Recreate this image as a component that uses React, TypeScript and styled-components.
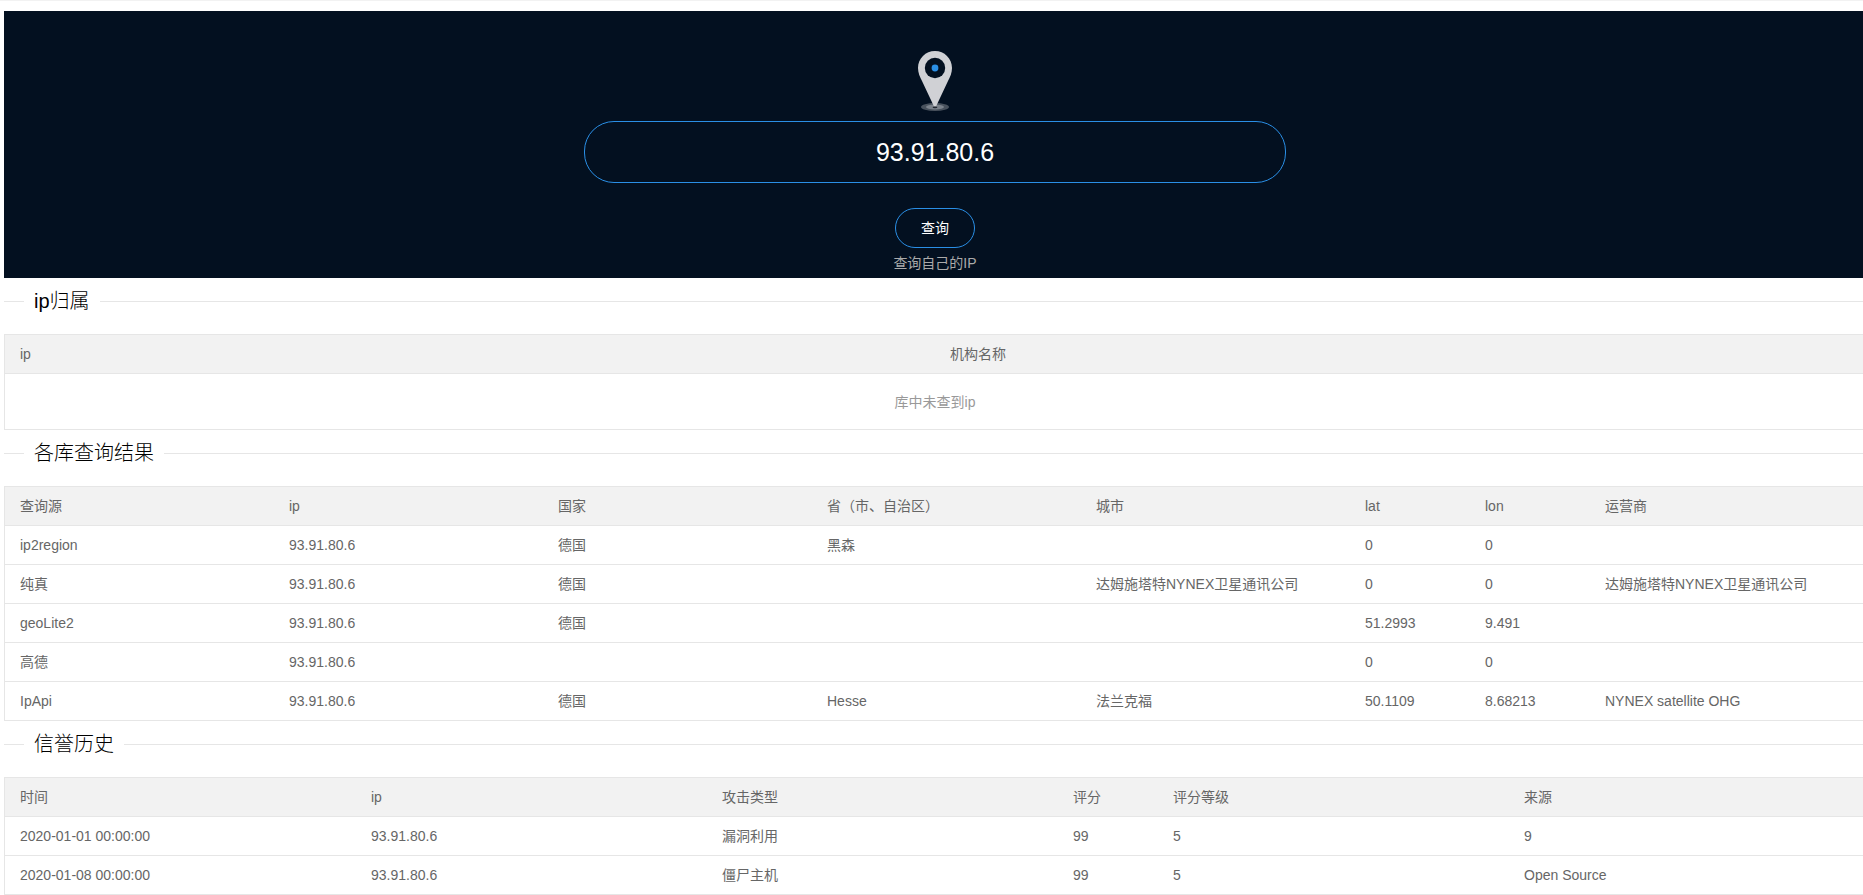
import React, { useState } from "react";
import styled, { createGlobalStyle } from "styled-components";

const GlobalStyle = createGlobalStyle`
  *, *::before, *::after { box-sizing: border-box; }
  body {
    margin: 0;
    background: #fff;
    color: #333;
    font: 14px/24px "Liberation Sans", "Noto Sans CJK SC", sans-serif;
  }
`;

const Page = styled.div`
  border-top: 1px solid #f2f2f2;
  overflow-x: clip;
`;

const Content = styled.main`
  margin: 10px -3px 0 4px;
`;

const Hero = styled.form`
  display: flex;
  flex-direction: column;
  align-items: center;
  height: 267px;
  padding-top: 38px;
  background: #031020;
`;

const IpInput = styled.input`
  width: 702px;
  max-width: 90%;
  height: 62px;
  margin-top: 8px;
  padding: 0 30px;
  border: 1px solid #2a8fe6;
  border-radius: 30px;
  background: transparent;
  color: #fff;
  font: inherit;
  font-size: 25px;
  text-align: center;
  outline: none;
`;

const QueryButton = styled.button`
  width: 80px;
  height: 40px;
  margin-top: 25px;
  padding: 0;
  border: 1px solid #2a8fe6;
  border-radius: 20px;
  background: transparent;
  color: #fff;
  font: inherit;
  cursor: pointer;
`;

const OwnIpLink = styled.a`
  margin-top: 3px;
  color: #aaa;
  text-decoration: none;
`;

const Section = styled.fieldset`
  margin: 8px 0 18px;
  padding: 0;
  border: 0;
  border-top: 1px solid #e6e6e6;
`;

const SectionTitle = styled.legend`
  margin-left: 20px;
  padding: 0 10px;
  color: #000;
  font-size: 20px;
  font-weight: 300;
  line-height: 30px;
`;

const DataTable = styled.table`
  width: 100%;
  table-layout: fixed;
  border: 1px solid #e6e6e6;
  border-collapse: separate;
  border-spacing: 0;
  color: #666;

  th, td {
    height: 39px;
    padding: 0 15px;
    border-bottom: 1px solid #e6e6e6;
    font-weight: 400;
    line-height: 28px;
    text-align: left;
    white-space: nowrap;
  }
  th { background: #f2f2f2; }
  tbody tr:last-child td { height: 38px; border-bottom: 0; }
`;

const Column = styled.col<{ $width?: number }>`
  width: ${(p) => (p.$width ? `${p.$width}px` : "auto")};
`;

const EmptyCell = styled.td`
  && {
    padding: 14px 15px 13px;
    color: #999;
    text-align: center;
  }
`;

type Col = { title: string; width?: number };

function PinIcon() {
  return (
    <svg width="36" height="64" viewBox="0 0 36 64" aria-hidden="true">
      <ellipse cx="18" cy="58" rx="14" ry="4" fill="#48515c" />
      <ellipse cx="18" cy="58" rx="9" ry="2.6" fill="#7b828b" />
      <path
        d="M18 2C8.600 2 1 9.500 1 19c0 5 2 9 4 13l12 25.500h2L31 32c2-4 4-8 4-13C35 9.500 27.400 2 18 2z"
        fill="#d0d1d5"
      />
      <ellipse cx="18" cy="58.300" rx="2.400" ry="0.900" fill="#20262f" />
      <circle cx="18" cy="19" r="10.200" fill="#031020" />
      <circle cx="18" cy="19" r="3.400" fill="#2a8fe6" />
    </svg>
  );
}

function Panel({ title, columns, rows, empty }: { title: string; columns: Col[]; rows: string[][]; empty?: string }) {
  return (
    <>
      <Section>
        <SectionTitle>{title}</SectionTitle>
      </Section>
      <DataTable aria-label={title}>
        <colgroup>
          {columns.map((c) => (
            <Column key={c.title} $width={c.width} />
          ))}
        </colgroup>
        <thead>
          <tr>
            {columns.map((c) => (
              <th key={c.title} scope="col">{c.title}</th>
            ))}
          </tr>
        </thead>
        <tbody>
          {rows.map((row, i) => (
            <tr key={i}>
              {row.map((cell, j) => (
                <td key={j}>{cell}</td>
              ))}
            </tr>
          ))}
          {empty && (
            <tr>
              <EmptyCell colSpan={columns.length}>{empty}</EmptyCell>
            </tr>
          )}
        </tbody>
      </DataTable>
    </>
  );
}

const ownerColumns: Col[] = [{ title: "ip" }, { title: "机构名称" }];

const sourceColumns: Col[] = [
  { title: "查询源" },
  { title: "ip" },
  { title: "国家" },
  { title: "省（市、自治区）" },
  { title: "城市" },
  { title: "lat", width: 120 },
  { title: "lon", width: 120 },
  { title: "运营商", width: 275 },
];

const sourceRows = [
  ["ip2region", "93.91.80.6", "德国", "黑森", "", "0", "0", ""],
  ["纯真", "93.91.80.6", "德国", "", "达姆施塔特NYNEX卫星通讯公司", "0", "0", "达姆施塔特NYNEX卫星通讯公司"],
  ["geoLite2", "93.91.80.6", "德国", "", "", "51.2993", "9.491", ""],
  ["高德", "93.91.80.6", "", "", "", "0", "0", ""],
  ["IpApi", "93.91.80.6", "德国", "Hesse", "法兰克福", "50.1109", "8.68213", "NYNEX satellite OHG"],
];

const historyColumns: Col[] = [
  { title: "时间" },
  { title: "ip" },
  { title: "攻击类型" },
  { title: "评分", width: 100 },
  { title: "评分等级" },
  { title: "来源", width: 356 },
];

const historyRows = [
  ["2020-01-01 00:00:00", "93.91.80.6", "漏洞利用", "99", "5", "9"],
  ["2020-01-08 00:00:00", "93.91.80.6", "僵尸主机", "99", "5", "Open Source"],
];

export default function App() {
  const [ip, setIp] = useState("93.91.80.6");
  return (
    <Page>
      <GlobalStyle />
      <Content>
        <Hero onSubmit={(e) => e.preventDefault()}>
          <PinIcon />
          <IpInput aria-label="ip" value={ip} onChange={(e) => setIp(e.target.value)} />
          <QueryButton type="submit">查询</QueryButton>
          <OwnIpLink href="#">查询自己的IP</OwnIpLink>
        </Hero>
        <Panel title="ip归属" columns={ownerColumns} rows={[]} empty="库中未查到ip" />
        <Panel title="各库查询结果" columns={sourceColumns} rows={sourceRows} />
        <Panel title="信誉历史" columns={historyColumns} rows={historyRows} />
      </Content>
    </Page>
  );
}
